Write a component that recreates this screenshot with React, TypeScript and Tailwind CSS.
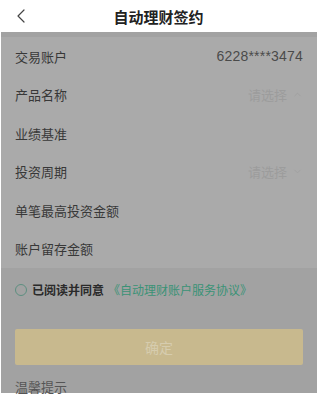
import { ChevronLeft, ChevronUp, ChevronDown } from 'lucide-react'

const FONT = { fontFamily: '"Noto Sans CJK SC", "Noto Sans", sans-serif' }

const ROWS: { label: string; value?: string; select?: 'up' | 'down' }[] = [
  { label: '交易账户', value: '6228****3474' },
  { label: '产品名称', select: 'up' },
  { label: '业绩基准' },
  { label: '投资周期', select: 'down' },
  { label: '单笔最高投资金额' },
  { label: '账户留存金额' },
]

export default function App() {
  return (
    <div className="w-[326px] h-[400px] bg-white overflow-hidden" style={FONT}>
      <div className="w-[317px] flex flex-col">
        {/* Header */}
        <div className="h-[32px] flex items-center relative bg-white">
          <ChevronLeft className="absolute left-[9px] top-[4px] w-[24px] h-[24px] text-[#444]" strokeWidth={1.2} />
          <div className="flex-1 text-center text-[15px] font-bold text-[#222] leading-none">自动理财签约</div>
        </div>

        {/* Masked body */}
        <div className="ml-[1px] h-[361px] bg-[#a2a2a2] flex flex-col">
          <div className="h-[7px]" />
          <div className="bg-[#aaaaaa]">
            {ROWS.map((r) => (
              <div key={r.label} className="h-[38.5px] flex items-center px-[14px]">
                <span className="text-[13px] text-[#383838] flex-1">{r.label}</span>
                {r.value && (
                  <span className="text-[14px] text-[#4a4a4a] tracking-[0.2px]" style={{ fontFamily: '"Liberation Sans", Arial, sans-serif' }}>
                    {r.value}
                  </span>
                )}
                {r.select && (
                  <span className="flex items-center gap-[5px] text-[13px] text-[#9c9c9c]">
                    请选择
                    {r.select === 'up' ? (
                      <ChevronUp className="w-[11px] h-[11px]" strokeWidth={1.5} />
                    ) : (
                      <ChevronDown className="w-[11px] h-[11px]" strokeWidth={1.5} />
                    )}
                  </span>
                )}
              </div>
            ))}
          </div>

          {/* Agreement */}
          <div className="flex items-center px-[14px] mt-[14px] h-[16px]">
            <span className="w-[12px] h-[12px] rounded-full border border-[#5d8f80] mr-[5px]" />
            <span className="text-[12px] font-bold text-[#2a2a2a]">已阅读并同意</span>
            <span className="text-[12px] text-[#3a9276] ml-[4px]">《自动理财账户服务协议》</span>
          </div>

          {/* Button */}
          <div className="px-[14px] mt-[31px]">
            <div className="h-[36px] rounded-[2px] bg-[#c8b98e] flex items-center justify-center text-[14px] text-[#d6ccae]">
              确定
            </div>
          </div>

          <div className="px-[14px] mt-[15px] text-[13px] text-[#555] leading-none">温馨提示</div>
        </div>
      </div>
    </div>
  )
}
